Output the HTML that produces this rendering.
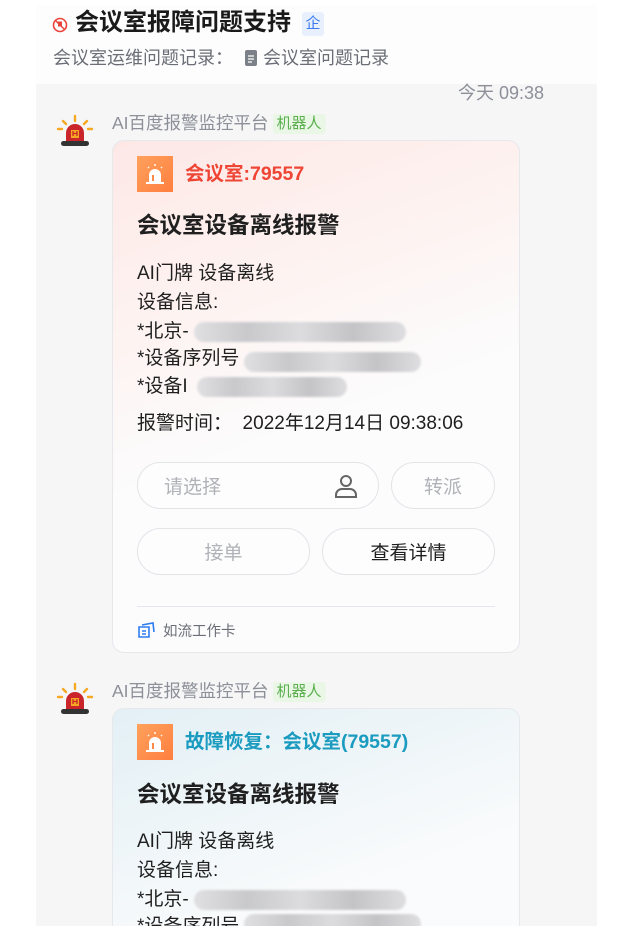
<!DOCTYPE html>
<html><head><meta charset="utf-8"><style>
*{margin:0;padding:0;box-sizing:border-box}
html,body{width:621px;height:936px;overflow:hidden}
body{background:#fff;font-family:"Liberation Sans","Noto Sans CJK SC",sans-serif;position:relative;color:#1f1f1f}
.abs{position:absolute}
.panel{left:36px;top:84px;width:561px;height:842px;background:#f6f6f7}
.head{left:36px;top:5px;width:561px;height:79px;background:#fdfdfe}
.card{position:absolute;left:112px;width:408px;border:1px solid #e6e8ec;border-radius:12px;overflow:hidden}
.c1{top:140px;height:513px;background:linear-gradient(160deg,#fde8e6 0%,#fdf3f1 30%,#fcfcfd 55%,#fcfcfd 100%)}
.c2{top:708px;height:240px;background:linear-gradient(160deg,#e3f0f5 0%,#eef5f8 35%,#fafbfc 70%)}
.ic{position:absolute;left:24px;top:15px;width:36px;height:36px;background:linear-gradient(135deg,#ffa15c,#ff7f3f)}
.t{position:absolute;left:24px;font-size:19px;line-height:22px;white-space:nowrap;color:#1f1f1f}
.blur{position:absolute;height:20px;border-radius:10px;background:linear-gradient(90deg,#e0e0e2,#c9c9cc,#dcdcde,#c4c4c7,#dedee0);filter:blur(1px)}
.btn{position:absolute;height:47px;border:1.5px solid #e3e4e8;border-radius:24px;background:#fdfdfd;font-size:19px;color:#b0b2b8;display:flex;align-items:center;justify-content:center}
.name{position:absolute;left:112px;font-size:17.5px;line-height:22px;color:#8d9099;white-space:nowrap}
.tag{display:inline-block;background:#eaf7e6;color:#5aae4d;font-size:15px;line-height:20px;padding:0 4px;border-radius:3px;margin-left:4px;vertical-align:1px}
</style></head><body>
<div class="abs head"></div>
<div class="abs panel"></div>
<svg class="abs" style="left:52px;top:17px" width="16" height="16" viewBox="0 0 16 16"><circle cx="8" cy="8" r="6.5" fill="none" stroke="#e8453c" stroke-width="1.6"/><path d="M6 4.5h4v5H6z" fill="#e8453c"/><path d="M3.5 3.5l9 9" stroke="#e8453c" stroke-width="1.5"/></svg>
<div class="abs" style="left:75px;top:8px;font-size:24px;line-height:30px;font-weight:bold;color:#1a1a1a">会议室报障问题支持</div>
<div class="abs" style="left:302px;top:12px;width:22px;height:24px;background:#e8f0fe;border-radius:3px;color:#3b7cf2;font-size:15px;text-align:center;line-height:24px">企</div>
<div class="abs" style="left:53px;top:47px;font-size:18px;line-height:22px;color:#6b6e76">会议室运维问题记录：</div>
<svg class="abs" style="left:244px;top:49px" width="14" height="18" viewBox="0 0 14 18"><rect x="1" y="1" width="12" height="16" rx="2" fill="#7c8088"/><path d="M4 7h6M4 10h6M4 13h4" stroke="#fff" stroke-width="1.3"/></svg>
<div class="abs" style="left:263px;top:47px;font-size:18px;line-height:22px;color:#6b6e76">会议室问题记录</div>
<div class="abs" style="left:458px;top:82px;font-size:18px;line-height:22px;color:#8d9099">今天 09:38</div>

<svg class="abs" style="left:55px;top:114px" width="40" height="36" viewBox="0 0 40 36"><g stroke="#f7a823" stroke-width="2.4" stroke-linecap="round"><path d="M20 2v5M8 7l3 3M32 7l-3 3M3 15h4M33 15h4"/></g><path d="M11 27v-8a9 9 0 0 1 18 0v8z" fill="#c9252b"/><path d="M16 16h8v8h-8z" fill="#f7a823"/><path d="M18 17v5M22 17v5M18 19.5h4" stroke="#c9252b" stroke-width="1.3"/><rect x="6" y="27" width="28" height="5" rx="2.5" fill="#333"/></svg>
<div class="name" style="top:112px">AI百度报警监控平台<span class="tag">机器人</span></div>
<div class="card c1">
 <div class="ic"><svg width="36" height="36" viewBox="0 0 36 36"><path d="M12 26v-7a6 6 0 0 1 12 0v7z" fill="#fff"/><rect x="9" y="26" width="18" height="2" fill="#fff"/><path d="M18 8v2M11 11l1 1M25 11l-1 1" stroke="#fff" stroke-width="1.4"/><rect x="15" y="19" width="2" height="6" fill="#ff8a48"/></svg></div>
 <div class="abs" style="left:72px;top:21px;font-size:19.5px;line-height:24px;font-weight:bold;color:#ef4535">会议室:79557</div>
 <div class="t" style="top:72px;font-size:22.5px;line-height:26px;font-weight:bold">会议室设备离线报警</div>
 <div class="t" style="top:122px">AI门牌 设备离线</div>
 <div class="t" style="top:151px">设备信息:</div>
 <div class="t" style="top:180px">*北京-</div><div class="blur" style="left:81px;top:181px;width:212px"></div>
 <div class="t" style="top:207px">*设备序列号</div><div class="blur" style="left:131px;top:211px;width:177px"></div>
 <div class="t" style="top:235px">*设备I</div><div class="blur" style="left:84px;top:236px;width:150px"></div>
 <div class="t" style="top:272px">报警时间：&nbsp;&nbsp;2022年12月14日 09:38:06</div>
 <div class="btn" style="left:24px;top:321px;width:242px;justify-content:flex-start;padding-left:26px">请选择</div>
 <svg class="abs" style="left:220px;top:332px" width="26" height="26" viewBox="0 0 26 26"><circle cx="13" cy="8" r="5" fill="none" stroke="#666" stroke-width="2"/><path d="M3 24v-2a6 6 0 0 1 6-6h8a6 6 0 0 1 6 6v2z" fill="none" stroke="#666" stroke-width="2"/></svg>
 <div class="btn" style="left:278px;top:321px;width:104px">转派</div>
 <div class="btn" style="left:24px;top:387px;width:173px">接单</div>
 <div class="btn" style="left:209px;top:387px;width:173px;color:#1f1f1f">查看详情</div>
 <div class="abs" style="left:24px;top:465px;width:358px;height:1px;background:#e5e7ec"></div>
 <svg class="abs" style="left:24px;top:480px" width="18" height="18" viewBox="0 0 18 18"><path d="M2 6h10v10H2z" fill="none" stroke="#2f7cf0" stroke-width="1.6"/><path d="M5 4l11-2 1 9" fill="none" stroke="#2f7cf0" stroke-width="1.6"/><path d="M5 10h4M5 13h4" stroke="#2f7cf0" stroke-width="1.4"/></svg>
 <div class="abs" style="left:50px;top:479px;font-size:14.5px;color:#6b6e76">如流工作卡</div>
</div>

<svg class="abs" style="left:55px;top:682px" width="40" height="36" viewBox="0 0 40 36"><g stroke="#f7a823" stroke-width="2.4" stroke-linecap="round"><path d="M20 2v5M8 7l3 3M32 7l-3 3M3 15h4M33 15h4"/></g><path d="M11 27v-8a9 9 0 0 1 18 0v8z" fill="#c9252b"/><path d="M16 16h8v8h-8z" fill="#f7a823"/><path d="M18 17v5M22 17v5M18 19.5h4" stroke="#c9252b" stroke-width="1.3"/><rect x="6" y="27" width="28" height="5" rx="2.5" fill="#333"/></svg>
<div class="name" style="top:680px">AI百度报警监控平台<span class="tag">机器人</span></div>
<div class="card c2">
 <div class="ic"><svg width="36" height="36" viewBox="0 0 36 36"><path d="M12 26v-7a6 6 0 0 1 12 0v7z" fill="#fff"/><rect x="9" y="26" width="18" height="2" fill="#fff"/><path d="M18 8v2M11 11l1 1M25 11l-1 1" stroke="#fff" stroke-width="1.4"/><rect x="15" y="19" width="2" height="6" fill="#ff8a48"/></svg></div>
 <div class="abs" style="left:72px;top:21px;font-size:19.5px;line-height:24px;font-weight:bold;color:#1a9bbf">故障恢复：会议室(79557)</div>
 <div class="t" style="top:73px;font-size:22.5px;line-height:26px;font-weight:bold">会议室设备离线报警</div>
 <div class="t" style="top:122px">AI门牌 设备离线</div>
 <div class="t" style="top:151px">设备信息:</div>
 <div class="t" style="top:180px">*北京-</div><div class="blur" style="left:81px;top:181px;width:212px"></div>
 <div class="t" style="top:207px">*设备序列号</div><div class="blur" style="left:131px;top:205px;width:177px"></div>
</div>
<div class="abs" style="left:0;top:926px;width:621px;height:10px;background:#fff"></div>
</body></html>
